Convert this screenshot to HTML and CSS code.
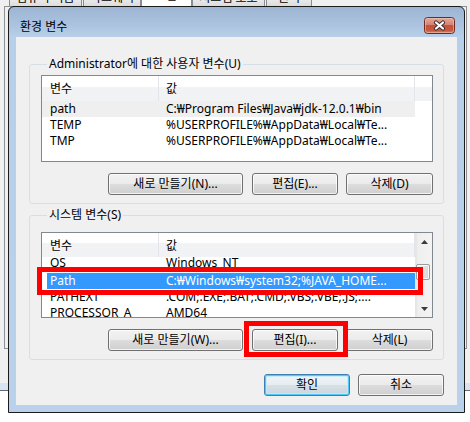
FILE: index.html
```html
<!DOCTYPE html>
<html lang="ko">
<head>
<meta charset="utf-8">
<title>환경 변수</title>
<link rel="stylesheet" href="styles.css">
</head>
<body>
<div class="backdrop">
  <div class="tabs">
    <div class="tab t1"><span>컴퓨터 이름</span></div>
    <div class="tab t2"><span>하드웨어</span></div>
    <div class="tab t3 active"><span>고급</span></div>
    <div class="tab t4"><span>시스템 보호</span></div>
    <div class="tab t5"><span>원격</span></div>
  </div>
  <div class="panel"></div>
  <div class="under"></div>
  <div class="band"></div>
  <div class="white"></div>
</div>

<div class="dialog">
  <div class="titlebar">
    <span class="title">환경 변수</span>
    <span class="close" aria-label="닫기">
      <svg width="31" height="17" viewBox="0 0 31 17">
        <defs>
          <linearGradient id="cg" x1="0" y1="0" x2="0" y2="1">
            <stop offset="0" stop-color="#e6aa9c"/>
            <stop offset="0.45" stop-color="#d58471"/>
            <stop offset="0.5" stop-color="#c4523d"/>
            <stop offset="0.8" stop-color="#c65840"/>
            <stop offset="1" stop-color="#da8a6e"/>
          </linearGradient>
        </defs>
        <rect x="0.5" y="0.5" width="30" height="16" rx="3" fill="url(#cg)" stroke="#6e2a22"/>
        <rect x="1.5" y="1.5" width="28" height="14" rx="2" fill="none" stroke="#f3c8bb" stroke-opacity="0.55"/>
        <path d="M12 5.5 L19 11.5 M19 5.5 L12 11.5" stroke="#3a3030" stroke-width="4.2" stroke-linecap="round"/>
        <path d="M12 5.5 L19 11.5 M19 5.5 L12 11.5" stroke="#ffffff" stroke-width="2.2" stroke-linecap="round"/>
      </svg>
    </span>
  </div>
  <div class="client">
    <fieldset class="group user">
      <legend>Administrator에 대한 사용자 변수(U)</legend>
      <div class="listview">
        <div class="lv-main">
          <div class="lv-header">
            <div class="hc">변수</div>
            <div class="hc v">값</div>
            <div class="hc last"></div>
          </div>
          <div class="lv-rows">
            <div class="row grey"><span>path</span><span class="v">C:₩Program Files₩Java₩jdk-12.0.1₩bin</span></div>
            <div class="row"><span>TEMP</span><span class="v">%USERPROFILE%₩AppData₩Local₩Te...</span></div>
            <div class="row"><span>TMP</span><span class="v">%USERPROFILE%₩AppData₩Local₩Te...</span></div>
          </div>
        </div>
      </div>
      <div class="btn-row">
        <button class="btn wide">새로 만들기(N)...</button>
        <button class="btn">편집(E)...</button>
        <button class="btn w87">삭제(D)</button>
      </div>
    </fieldset>

    <fieldset class="group sys">
      <legend>시스템 변수(S)</legend>
      <div class="listview">
        <div class="lv-main">
          <div class="lv-header">
            <div class="hc">변수</div>
            <div class="hc v">값</div>
          </div>
          <div class="lv-rows">
            <div class="row first"><span>OS</span><span class="v">Windows_NT</span></div>
            <div class="row blue"><span>Path</span><span class="v">C:₩Windows₩system32;%JAVA_HOME...</span></div>
            <div class="row"><span>PATHEXT</span><span class="v">.COM;.EXE;.BAT;.CMD;.VBS;.VBE;.JS;....</span></div>
            <div class="row"><span>PROCESSOR_A</span><span class="v">AMD64</span></div>
          </div>
        </div>
        <div class="scrollbar">
          <div class="sb-btn"><svg width="7" height="4" viewBox="0 0 7 4"><path d="M3.5 0 L7 4 L0 4 Z" fill="#3b3b3b"/></svg></div>
          <div class="sb-track"><div class="sb-thumb"></div></div>
          <div class="sb-btn"><svg width="7" height="4" viewBox="0 0 7 4"><path d="M0 0 L7 0 L3.5 4 Z" fill="#3b3b3b"/></svg></div>
        </div>
      </div>
      <div class="btn-row">
        <button class="btn wide">새로 만들기(W)...</button>
        <button class="btn">편집(I)...</button>
        <button class="btn w87">삭제(L)</button>
      </div>
    </fieldset>

    <div class="btn-row bottom">
      <button class="btn default">확인</button>
      <button class="btn">취소</button>
    </div>

    <div class="mark mark-row"></div>
    <div class="mark mark-btn"></div>
  </div>
</div>
</body>
</html>
```
FILE: styles.css
```css
* { box-sizing: border-box; }
html, body { margin: 0; padding: 0; }
body {
  width: 470px;
  height: 422px;
  overflow: hidden;
  position: relative;
  background: #ffffff;
  font-family: "Noto Sans", "Noto Sans CJK KR", sans-serif;
  font-size: 12px;
  color: #000;
}

/* window behind the dialog */
.backdrop {
  height: 422px;
  display: flex;
  flex-direction: column;
  background: #f0f0f0;
}
.tabs {
  height: 6px;
  display: flex;
  padding-left: 9px;
  flex: none;
}
.tab {
  height: 6px;
  overflow: hidden;
  border-left: 1px solid #898c95;
  border-right: 1px solid #898c95;
  background: linear-gradient(#e9e9e9, #dcdcdc);
  text-align: center;
  line-height: 16px;
  white-space: nowrap;
}
.tab span { display: block; margin-top: -10px; }
.tab.active { background: #ffffff; height: 7px; }
.tab.active span { margin-top: -12px; }
.t1 { width: 73px; }
.t2 { width: 58px; margin-left: 1px; }
.t3 { width: 51px; }
.t4 { width: 73px; }
.t5 { width: 46px; margin-left: 1px; }
.panel {
  flex: none;
  margin-left: 4px;
  width: 463px;
  height: 343px;
  border: 1px solid #8e9096;
  background: #f0f0f0;
}
.under { flex: none; height: 34px; }
.band { flex: none; height: 8px; background: #d8e4f2; border-bottom: 1px solid #5f6a75; }
.white { flex: 1; background: #ffffff; }

/* dialog window */
.dialog {
  position: absolute;
  left: 8px;
  top: 6px;
  width: 457px;
  height: 407px;
  border: 1px solid #1b1b1b;
  border-radius: 6px 6px 0 0;
  background: linear-gradient(#9cb5d2 0, #abc3df 18px, #b8cfe9 30px, #b9d1ea 100%);
  padding: 0 7px 7px;
  display: flex;
  flex-direction: column;
}
.titlebar {
  height: 30px;
  flex: none;
  display: flex;
  justify-content: space-between;
  align-items: flex-start;
  padding: 10px 2px 0 4px;
}
.title { margin-top: 2px; line-height: 16px; }
.close { display: block; width: 31px; height: 17px; }
.close svg { display: block; }

.client {
  flex: 1;
  position: relative;
  background: #f0f0f0;
  display: flex;
  flex-direction: column;
  padding: 19px 13px 9px;
}

/* group boxes */
.group {
  margin: 0;
  min-width: 0;
  padding: 3px 10px 8px 11px;
  border: 1px solid #d5dfe5;
  border-radius: 3px;
}
.group legend {
  margin-left: 6px;
  padding: 0 2px;
  line-height: 16px;
}
.group.sys { margin-top: 3px; padding-top: 9px; }

/* list views */
.listview {
  height: 87px;
  border: 1px solid #828790;
  background: #ffffff;
  display: flex;
  overflow: hidden;
}
.sys .listview { height: 86px; }
.lv-main { flex: 1; min-width: 0; display: flex; flex-direction: column; position: relative; }
.lv-header {
  flex: none;
  height: 25px;
  display: grid;
  grid-template-columns: 117px 256px 1fr;
  background: linear-gradient(#ffffff 0, #ffffff 42%, #f2f3f4 42%, #f1f2f3 100%);
  position: relative;
  z-index: 1;
}
.sys .lv-header { height: 24px; grid-template-columns: 117px 256px; }
.hc {
  border-right: 1px solid #e2e5e9;
  padding: 5px 0 0 8px;
  line-height: 16px;
}
.hc.v { padding-left: 7px; }
.hc.last { border-right: none; }
.lv-rows { flex: 1; }
.row {
  display: grid;
  grid-template-columns: 117px 256px;
  width: 373px;
  height: 16px;
  line-height: 16px;
  white-space: nowrap;
}
.row.first { margin-top: -1px; height: 17px; padding-top: 0; line-height: 14px; }
.row span { overflow: hidden; padding-left: 8px; }
.row span.v { padding-left: 7px; }
.row.grey { background: #efefef; }
.row.blue {
  background: linear-gradient(to right, transparent 5px, #3399ff 5px);
  color: #ffffff;
}

/* scrollbar */
.scrollbar {
  width: 17px;
  flex: none;
  display: flex;
  flex-direction: column;
  background: linear-gradient(to right, #e4e4e4 0, #efefef 2px, #f3f3f3 100%);
  border-left: 1px solid #e6e6e6;
}
.sb-btn {
  height: 17px;
  flex: none;
  display: flex;
  align-items: center;
  justify-content: center;
}
.sb-btn svg { display: block; }
.sb-track { flex: 1; padding-top: 14px; }
.sb-thumb {
  width: 14px;
  height: 16px;
  border: 1px solid #9a9a9a;
  border-radius: 2px;
  background: linear-gradient(to right, #f4f4f4, #e6e6e6 50%, #d8d8d8);
  box-shadow: inset 0 0 0 1px #fbfbfb;
}

/* buttons */
.btn-row {
  display: flex;
  justify-content: flex-end;
  gap: 8px;
  margin-top: 11px;
}
.btn-row.bottom { margin-top: 14px; }
.btn {
  width: 86px;
  height: 22px;
  margin: 0;
  padding: 0;
  border: 1px solid #707070;
  border-radius: 3px;
  background: linear-gradient(#f2f2f2 0, #ebebeb 50%, #dddddd 50%, #cfcfcf 100%);
  box-shadow: inset 0 0 0 1px rgba(255, 255, 255, 0.75);
  font: inherit;
  color: #000;
  line-height: 16px;
  display: flex;
  align-items: center;
  justify-content: center;
}
.btn.wide { width: 135px; margin-right: 1px; }
.btn.w87 { width: 87px; }
.btn.default {
  border-color: #3c7fb1;
  background: linear-gradient(#eff4f7 0, #e6edf1 50%, #d6e0e6 50%, #cbd6dd 100%);
  box-shadow: inset 0 0 0 1px #52c8f6, inset 0 0 0 2px rgba(190, 235, 252, 0.8);
}

/* red annotation boxes drawn over the screenshot */
.mark {
  position: absolute;
  border: 5px solid #ff0000;
}
.mark-row { left: 21px; top: 230px; width: 386px; height: 28px; }
.mark-btn { left: 228px; top: 284px; width: 104px; height: 36px; }
```
